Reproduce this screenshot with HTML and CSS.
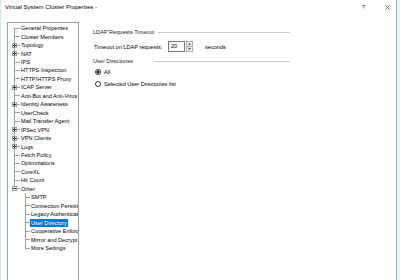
FILE: index.html
```html
<!DOCTYPE html>
<html>
<head>
<meta charset="utf-8">
<link rel="stylesheet" href="styles.css">
</head>
<body>
<div class="window">
  <div class="titlebar">
    <span class="title">Virtual System Cluster Properties -</span>
    <span class="help">?</span>
    <svg class="close" width="5" height="5" viewBox="0 0 5 5"><path d="M0.3 0.3 L4.7 4.7 M4.7 0.3 L0.3 4.7" stroke="#444" stroke-width="0.7" fill="none"/></svg>
  </div>
  <div class="main">
    <div class="tree">
      <div class="row"><span class="c first"></span><span class="lbl">General Properties</span></div>
      <div class="row"><span class="c mid"></span><span class="lbl">Cluster Members</span></div>
      <div class="row"><span class="c mid"><span class="box plus"></span></span><span class="lbl">Topology</span></div>
      <div class="row"><span class="c mid"><span class="box plus"></span></span><span class="lbl">NAT</span></div>
      <div class="row"><span class="c mid"></span><span class="lbl">IPS</span></div>
      <div class="row"><span class="c mid"></span><span class="lbl">HTTPS Inspection</span></div>
      <div class="row"><span class="c mid"></span><span class="lbl">HTTP/HTTPS Proxy</span></div>
      <div class="row"><span class="c mid"><span class="box plus"></span></span><span class="lbl">ICAP Server</span></div>
      <div class="row"><span class="c mid"></span><span class="lbl">Anti-Bot and Anti-Virus</span></div>
      <div class="row"><span class="c mid"><span class="box plus"></span></span><span class="lbl">Identity Awareness</span></div>
      <div class="row"><span class="c mid"></span><span class="lbl">UserCheck</span></div>
      <div class="row"><span class="c mid"></span><span class="lbl">Mail Transfer Agent</span></div>
      <div class="row"><span class="c mid"><span class="box plus"></span></span><span class="lbl">IPSec VPN</span></div>
      <div class="row"><span class="c mid"><span class="box plus"></span></span><span class="lbl">VPN Clients</span></div>
      <div class="row"><span class="c mid"><span class="box plus"></span></span><span class="lbl">Logs</span></div>
      <div class="row"><span class="c mid"></span><span class="lbl">Fetch Policy</span></div>
      <div class="row"><span class="c mid"></span><span class="lbl">Optimizations</span></div>
      <div class="row"><span class="c mid"></span><span class="lbl">CoreXL</span></div>
      <div class="row"><span class="c mid"></span><span class="lbl">Hit Count</span></div>
      <div class="row"><span class="c last"><span class="box minus"></span></span><span class="lbl">Other</span></div>
      <div class="row"><span class="c"></span><span class="c2 mid"></span><span class="lbl">SMTP</span></div>
      <div class="row"><span class="c"></span><span class="c2 mid"></span><span class="lbl">Connection Persistence</span></div>
      <div class="row"><span class="c"></span><span class="c2 mid"></span><span class="lbl">Legacy Authentication</span></div>
      <div class="row"><span class="c"></span><span class="c2 mid"></span><span class="lbl selected">User Directory</span></div>
      <div class="row"><span class="c"></span><span class="c2 mid"></span><span class="lbl">Cooperative Enforcement</span></div>
      <div class="row"><span class="c"></span><span class="c2 mid"></span><span class="lbl">Mirror and Decrypt</span></div>
      <div class="row"><span class="c"></span><span class="c2 last"></span><span class="lbl">More Settings</span></div>
    </div>
    <div class="content">
      <div class="group"><span>LDAP Requests Timeout</span><span class="rule rule1"></span></div>
      <div class="field">
        <span class="field-label">Timeout on LDAP requests:</span>
        <span class="input">20</span>
        <svg class="spin" width="7" height="11" viewBox="0 0 7 11">
          <rect x="0.5" y="0.5" width="6" height="4.8" fill="#f0f0f0" stroke="#adadad"/>
          <rect x="0.5" y="5.7" width="6" height="4.8" fill="#f0f0f0" stroke="#adadad"/>
          <path d="M2 3.8 L3.5 2 L5 3.8 Z" fill="#333"/>
          <path d="M2 7.2 L3.5 9 L5 7.2 Z" fill="#333"/>
        </svg>
        <span class="unit">seconds</span>
      </div>
      <div class="group group2"><span>User Directories</span><span class="rule rule2"></span></div>
      <div class="radio r1"><span class="dot checked"></span><span class="rlbl">All</span></div>
      <div class="radio r2"><span class="dot"></span><span class="rlbl">Selected User Directories list</span></div>
    </div>
  </div>
</div>
</body>
</html>
```

FILE: styles.css
```css
html, body {
  margin: 0;
  padding: 0;
}
body {
  background: #eef2f6;
  font-family: "Liberation Sans", Arial, sans-serif;
  font-size: 5.6px;
  color: #000;
  width: 400px;
  height: 280px;
  overflow: hidden;
}
.window {
  width: 395px;
  height: 280px;
  background: #fff;
  border-left: 1px solid #d6e7f7;
  border-right: 1px solid #7db6ea;
  overflow: hidden;
  display: flex;
  flex-direction: column;
}
.titlebar {
  height: 22px;
  flex-shrink: 0;
  box-sizing: border-box;
  padding-top: 4px;
  display: flex;
  align-items: flex-start;
  font-size: 6px;
  line-height: 6px;
}
.title {
  margin-left: 4px;
  flex: 1;
}
.help {
  margin-right: 20px;
  color: #333;
}
.close {
  margin-right: 6px;
  margin-top: 0.5px;
}
.main {
  display: flex;
  flex: 1;
  min-height: 0;
}
.tree {
  margin-left: 6px;
  width: 70px;
  flex-shrink: 0;
  border: 1px solid #a0a0a0;
  border-bottom: none;
  padding-top: 1px;
  overflow: hidden;
}
.row {
  display: flex;
  align-items: center;
  height: 8.46px;
  white-space: nowrap;
}
.c, .c2 {
  flex-shrink: 0;
  height: 100%;
  display: flex;
  align-items: center;
  background-repeat: no-repeat;
}
.c { width: 12px; }
.c2 { width: 10px; }
.c.mid, .c.first, .c.last {
  background-image: linear-gradient(#a0a0a0, #a0a0a0), linear-gradient(#a0a0a0, #a0a0a0);
}
.c.mid { background-size: 1px 100%, 6px 1px; background-position: 6px 0, 6px 50%; }
.c.first { background-size: 1px 50%, 6px 1px; background-position: 6px 100%, 6px 50%; }
.c.last { background-size: 1px 50%, 6px 1px; background-position: 6px 0, 6px 50%; }
.c2.mid, .c2.last {
  background-image: linear-gradient(#a0a0a0, #a0a0a0), linear-gradient(#a0a0a0, #a0a0a0);
}
.c2.mid { background-size: 1px 100%, 5px 1px; background-position: 5px 0, 5px 50%; }
.c2.last { background-size: 1px 50%, 5px 1px; background-position: 5px 0, 5px 50%; }
.box {
  margin-left: 4px;
  width: 5px;
  height: 5px;
  box-sizing: border-box;
  border: 1px solid #9a9a9a;
  background-color: #fff;
  background-repeat: no-repeat;
}
.box.plus {
  background-image: linear-gradient(#333, #333), linear-gradient(#333, #333);
  background-size: 3px 1px, 1px 3px;
  background-position: 0 1px, 1px 0;
}
.box.minus {
  background-image: linear-gradient(#333, #333);
  background-size: 3px 1px;
  background-position: 0 1px;
}
.lbl {
  padding: 0 1px;
  line-height: 8px;
  height: 8px;
}
.lbl.selected {
  background: #0078d7;
  color: #fff;
}
.content {
  padding-left: 14px;
  padding-top: 6px;
  display: flex;
  flex-direction: column;
  align-items: flex-start;
}
.group {
  display: flex;
  align-items: center;
  width: 197px;
  height: 8px;
  line-height: 8px;
  color: #222;
}
.rule {
  margin-left: auto;
  height: 1px;
  background: #cdcdcd;
}
.rule1 { width: 132px; }
.rule2 { width: 136px; }
.group2 { margin-top: 5px; }
.field {
  display: flex;
  align-items: center;
  height: 11px;
  margin-top: 5px;
}
.field-label {
  width: 74px;
  padding-left: 1px;
}
.input {
  width: 17px;
  height: 11px;
  box-sizing: border-box;
  border: 1px solid #7a7a7a;
  padding-left: 2px;
  line-height: 9px;
}
.spin {
  margin-left: 1px;
  display: block;
}
.unit {
  margin-left: 12px;
}
.radio {
  display: flex;
  align-items: center;
  height: 8px;
}
.r1 { margin-top: 3px; }
.r2 { margin-top: 4px; }
.dot {
  margin-left: 2px;
  width: 6px;
  height: 6px;
  box-sizing: border-box;
  border: 1px solid #333;
  border-radius: 50%;
  background: #fff;
}
.dot.checked {
  background: radial-gradient(circle, #222 1.3px, #fff 1.8px);
}
.rlbl {
  margin-left: 3px;
}
```
